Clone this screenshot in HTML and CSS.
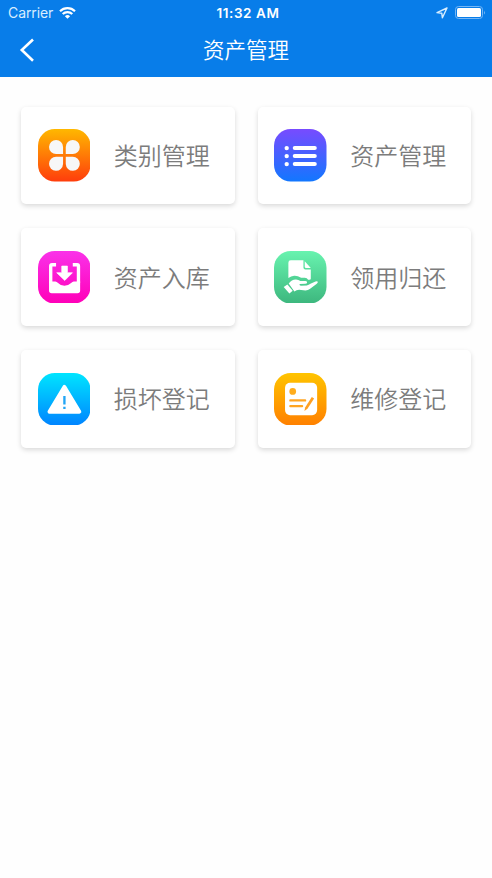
FILE: index.html
```html
<!DOCTYPE html>
<html lang="zh-CN">
<head>
<meta charset="utf-8">
<title>资产管理</title>
<link rel="stylesheet" href="styles.css">
</head>
<body>
<header class="header">
  <div class="status">
    <div class="carrier">
      <span>Carrier</span>
      <svg class="wifi" viewBox="0 0 17 12">
        <path d="M1 4.200a10.800 10.800 0 0 1 15 0M3.700 7a7 7 0 0 1 9.600 0" fill="none" stroke="#fff" stroke-width="2.200"/>
        <path d="M8.500 11.800 5.900 9.200a3.800 3.800 0 0 1 5.200 0z" fill="#fff"/>
      </svg>
    </div>
    <span class="time">11:32 AM</span>
    <div class="indicators">
      <svg class="location" viewBox="0 0 12 12"><path d="M11 1 1 5.600l4.800.700.600 4.500z" fill="none" stroke="#d6edff" stroke-width="1.400" stroke-linejoin="round"/></svg>
      <svg class="battery" viewBox="0 0 31 13">
        <rect x=".5" y=".5" width="27" height="12" rx="3" fill="none" stroke="#75b6f5"/>
        <rect x="2" y="2" width="24" height="9" rx="1.500" fill="#fff"/>
        <path d="M29 4.500q1.800 2 0 4z" fill="#75b6f5"/>
      </svg>
    </div>
  </div>
  <nav class="navbar">
    <svg class="back" viewBox="0 0 16 26"><path d="M14 2.500 2.800 13 14 23.700" fill="none" stroke="#fff" stroke-width="2.600"/></svg>
    <h1 class="title">资产管理</h1>
  </nav>
</header>
<main class="grid">
  <a class="card">
    <svg class="icon" viewBox="24 26 157 157">
      <linearGradient id="g1" x2="0" y2="1"><stop stop-color="#ffb800"/><stop offset="1" stop-color="#ff3d0c"/></linearGradient>
      <rect x="24" y="26" width="157" height="157" rx="50" fill="url(#g1)"/>
      <g fill="#f7f7f7">
        <path d="M99 101H78a21 21 0 1 1 21-21z"/>
        <path d="M107 101V80a21 21 0 1 1 21 21z"/>
        <path d="M99 109v22a21 21 0 1 1-21-22z"/>
        <path d="M107 109h21a21 21 0 1 1-21 22z"/>
      </g>
    </svg>
    <span class="label">类别管理</span>
  </a>
  <a class="card">
    <svg class="icon" viewBox="24 26 157 157">
      <linearGradient id="g2" x2="0" y2="1"><stop stop-color="#784bff"/><stop offset="1" stop-color="#1277ff"/></linearGradient>
      <rect x="24" y="26" width="157" height="157" rx="50" fill="url(#g2)"/>
      <path d="M86 83h60M86 107h60M86 131h60" stroke="#fff" stroke-width="12" stroke-linecap="round"/>
      <g fill="#fff"><circle cx="62" cy="83" r="6.500"/><circle cx="62" cy="107" r="6.500"/><circle cx="62" cy="131" r="6.500"/></g>
    </svg>
    <span class="label">资产管理</span>
  </a>
  <a class="card">
    <svg class="icon" viewBox="24 26 157 157">
      <linearGradient id="g3" x2="0" y2="1"><stop stop-color="#fa32e9"/><stop offset="1" stop-color="#ff00b8"/></linearGradient>
      <rect x="24" y="26" width="157" height="157" rx="50" fill="url(#g3)"/>
      <path d="M78 67H66q-4 0-4 4v50M128 67h13q4 0 4 4v50" fill="none" stroke="#fff" stroke-width="10"/>
      <path d="M57 117h19q4 0 8 5 7 8 19 8t20-8q4-5 8-5h19v27q0 8-8 8H65q-8 0-8-8z" fill="#fff"/>
      <path d="M95 71h17v20h15l-23 23-24-23h15z" fill="#fff" stroke="#fff" stroke-width="2" stroke-linejoin="round"/>
    </svg>
    <span class="label">资产入库</span>
  </a>
  <a class="card">
    <svg class="icon" viewBox="24 26 157 157">
      <linearGradient id="g4" x2="0" y2="1"><stop stop-color="#68f3af"/><stop offset="1" stop-color="#3db77e"/></linearGradient>
      <rect x="24" y="26" width="157" height="157" rx="50" fill="url(#g4)"/>
      <path d="M74 54h38v21q0 6 6 6h16v28q0 3-4 3h-4q-3-6-10-6h-11q-11-7-21-6-9 1-17 7V61q0-7 7-7z" fill="#fff"/>
      <path d="M116 57l18 20h-14q-4 0-4-4z" fill="#fff"/>
      <path d="M68 123q10-13 22-12 7 1 13 5h14q6 0 6 4t-6 4l-16 1q-3 4 3 5l18-1q6-1 11-5l15-7q7-2 7 2 0 3-4 6l-20 15q-5 4-13 4l-19-2q-8 0-14 5z" fill="#fff"/>
      <path d="M53 134l11-8 16 19-10 8z" fill="#fff"/>
    </svg>
    <span class="label">领用归还</span>
  </a>
  <a class="card">
    <svg class="icon" viewBox="24 26 157 157">
      <linearGradient id="g5" x2="0" y2="1"><stop stop-color="#00e5ff"/><stop offset="1" stop-color="#0084ff"/></linearGradient>
      <rect x="24" y="26" width="157" height="157" rx="50" fill="url(#g5)"/>
      <path d="M103 67 148 142H58z" fill="#fff" stroke="#fff" stroke-width="11" stroke-linejoin="round"/>
      <path d="M103 95v25M103 127v7" stroke="#22a5f5" stroke-width="7"/>
    </svg>
    <span class="label">损坏登记</span>
  </a>
  <a class="card">
    <svg class="icon" viewBox="24 26 157 157">
      <linearGradient id="g6" x2="0" y2="1"><stop stop-color="#ffc400"/><stop offset="1" stop-color="#ff8000"/></linearGradient>
      <rect x="24" y="26" width="157" height="157" rx="50" fill="url(#g6)"/>
      <rect x="57" y="55" width="96" height="97" rx="15" fill="#fff"/>
      <circle cx="80" cy="81" r="10" fill="#ffac1c"/>
      <path d="M73 108h44M73 125h35" stroke="#ffa523" stroke-width="7" stroke-linecap="round"/>
      <path d="M137 98l7 4-20 31-9 7 2-11z" fill="#ffa023"/>
    </svg>
    <span class="label">维修登记</span>
  </a>
</main>
</body>
</html>
```
FILE: styles.css
```css
* { box-sizing: border-box; }

body {
  margin: 0;
  min-height: 878px;
  background: #fefefe;
  font-family: Inter, "Noto Sans CJK SC", sans-serif;
}

.header {
  height: 76.5px;
  background: #087de9;
  color: #fff;
}

.status {
  display: grid;
  grid-template-columns: 1fr auto 1fr;
  align-items: center;
  height: 25px;
  padding: 0 6px 0 8px;
}

.carrier {
  display: flex;
  align-items: center;
  gap: 6px;
  color: #d8edff;
  font-size: 14px;
  letter-spacing: -.1px;
  line-height: 25px;
}

.wifi { width: 17px; height: 12px; }

.time {
  margin-left: 2px;
  padding-top: 1px;
  font-size: 13.5px;
  font-weight: 600;
  letter-spacing: .6px;
  line-height: 24px;
}

.indicators {
  display: flex;
  align-items: center;
  justify-content: flex-end;
  gap: 7px;
}

.location { width: 12px; height: 12px; }
.battery { width: 31px; height: 13px; }

.navbar {
  display: grid;
  grid-template-columns: 16px 1fr 16px;
  align-items: center;
  height: 50px;
  padding: 0 19px;
}

.back { width: 16px; height: 26px; }

.title {
  margin: 0;
  padding-bottom: 2px;
  font-family: "Noto Sans CJK SC", sans-serif;
  font-size: 21.5px;
  font-weight: 350;
  line-height: 48px;
  text-align: center;
}

.grid {
  display: grid;
  grid-template-columns: 1fr 1fr;
  grid-auto-rows: 97.5px;
  gap: 24.3px 23px;
  padding: 30px 21px;
}

.card {
  display: flex;
  align-items: center;
  gap: 23.5px;
  padding-left: 16.700px;
  border-radius: 5px;
  background: #fff;
  box-shadow: 0 2px 5px rgba(0, 0, 0, .15);
}

.icon { width: 52.5px; height: 52.5px; flex: none; }

.label {
  padding-bottom: 1px;
  color: #7c7c7c;
  font-family: "Noto Sans CJK SC", sans-serif;
  font-size: 24px;
  font-weight: 350;
  line-height: 36px;
}
```
